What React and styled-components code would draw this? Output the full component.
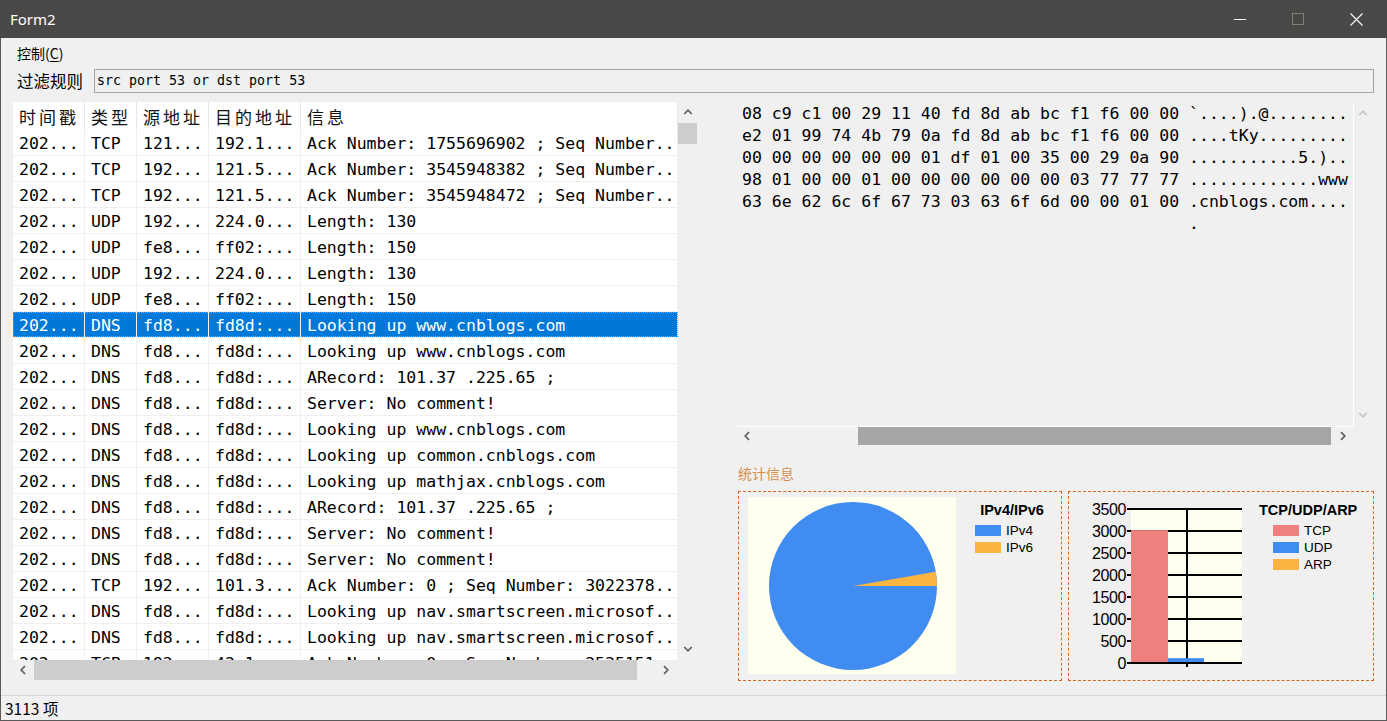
import React from 'react';
import styled, { createGlobalStyle } from 'styled-components';

const MONO = `"DejaVu Sans Mono", "Liberation Mono", monospace`;
const CJK = `"Noto Sans CJK SC", "Noto Sans", sans-serif`;
const ARIAL = `"Liberation Sans", Arial, sans-serif`;

const GlobalStyle = createGlobalStyle`
  html, body {
    margin: 0;
    padding: 0;
    background: #f0f0f0;
    overflow: hidden;
  }
  * {
    box-sizing: border-box;
  }
`;

const Window = styled.div`
  width: 1387px;
  height: 721px;
  display: flex;
  flex-direction: column;
  background: #f0f0f0;
`;

const TitleBar = styled.div`
  height: 38px;
  flex: none;
  display: flex;
  align-items: center;
  padding-left: 10px;
  background: #4a4846;
  color: #fff;
  font-family: "Noto Sans", sans-serif;
  font-size: 15px;
`;

const Caption = styled.div`
  flex: 1;
`;

const Controls = styled.div`
  display: flex;
  height: 100%;
  margin-right: 2px;
`;

const CtrlButton = styled.div`
  width: 58px;
  height: 100%;
  display: flex;
  align-items: center;
  justify-content: center;
`;

const Body = styled.div`
  flex: 1;
  display: flex;
  flex-direction: column;
  border: 1px solid #5b5a58;
  border-top: none;
`;

const MenuBar = styled.div`
  height: 30px;
  display: flex;
  align-items: center;
  padding-left: 16px;
  font-family: ${CJK};
  font-size: 14px;
  color: #000;
`;

const Mnemonic = styled.span`
  text-decoration: underline;
  text-underline-offset: 2px;
`;

const FilterRow = styled.div`
  height: 24px;
  margin-top: 1px;
  display: flex;
  align-items: center;
  padding: 0 12px 0 16px;
`;

const FilterLabel = styled.label`
  width: 77px;
  font-family: ${CJK};
  font-size: 16.5px;
  color: #000;
`;

const FilterInput = styled.input`
  flex: 1;
  height: 24px;
  margin: 0;
  padding: 0 0 1px 2px;
  border: 1px solid #a3a3a3;
  background: #f0f0f0;
  outline: none;
  font-family: ${MONO};
  font-size: 13.3px;
  color: #000;
`;

const Main = styled.div`
  height: 579px;
  margin-top: 9px;
  display: flex;
  padding-left: 12px;
`;

/* ---------- packet list ---------- */

const List = styled.div`
  width: 684px;
  height: 578px;
  display: grid;
  grid-template-columns: 665px 19px;
  grid-template-rows: 558px 20px;
  background: #f0f0f0;
`;

const ListView = styled.div`
  background: #fff;
  overflow: hidden;
`;

const COLS = '72px 52px 72px 92px 1fr';

const HeaderRow = styled.div`
  display: grid;
  grid-template-columns: ${COLS};
  height: 28px;
`;

const HeaderCell = styled.div`
  display: flex;
  align-items: center;
  padding-left: 6px;
  border-right: 1px solid #e5e5e5;
  font-family: ${CJK};
  font-size: 17px;
  letter-spacing: 3px;
  color: #111;
  white-space: nowrap;
  overflow: hidden;
`;

const Row = styled.div`
  position: relative;
  display: grid;
  grid-template-columns: ${COLS};
  height: 26px;
  border-bottom: 1px solid #f0f0f0;
  background: ${p => (p.$selected ? '#0078d7' : '#fff')};
  color: ${p => (p.$selected ? '#fff' : '#000')};

  &::after {
    content: '';
    display: ${p => (p.$selected ? 'block' : 'none')};
    position: absolute;
    inset: 0;
    border: 1px dotted #ff8728;
    pointer-events: none;
  }
`;

const Cell = styled.div`
  display: flex;
  align-items: center;
  padding: 1px 0 0 6px;
  border-right: 1px solid #f0f0f0;
  font-family: ${MONO};
  font-size: 16.5px;
  white-space: pre;
  overflow: hidden;
`;

/* ---------- scrollbars ---------- */

const VScroll = styled.div`
  display: flex;
  flex-direction: column;
  background: #f0f0f0;
`;

const HScroll = styled.div`
  display: flex;
  align-items: center;
  background: #f0f0f0;
`;

const Corner = styled.div`
  background: #f0f0f0;
`;

const ArrowBox = styled.div`
  flex: none;
  width: ${p => p.$w}px;
  height: ${p => p.$h}px;
  display: flex;
  align-items: center;
  justify-content: center;
`;

const Thumb = styled.div`
  flex: none;
  width: ${p => p.$w};
  height: ${p => p.$h};
  margin: ${p => p.$m || '0'};
  background: ${p => p.$color};
`;

const Fill = styled.div`
  flex: 1;
`;

const ChevronSvg = styled.svg`
  transform: rotate(${p => p.$rot}deg);
`;

const ROT = { up: 0, right: 90, down: 180, left: 270 };

const Chevron = ({ dir, color }) => (
  <ChevronSvg $rot={ROT[dir]} width="10" height="10" viewBox="0 0 10 10">
    <path d="M1.2 7 L5 3.2 L8.8 7" fill="none" stroke={color} strokeWidth="1.7" />
  </ChevronSvg>
);

/* ---------- right column ---------- */

const RightCol = styled.div`
  width: 636px;
  margin-left: 41px;
  display: flex;
  flex-direction: column;
`;

const HexBox = styled.div`
  height: 343px;
  flex: none;
  display: grid;
  grid-template-columns: 616px 18px;
  grid-template-rows: 325px 18px;
`;

const HexText = styled.div`
  padding: 1px 0 0 4px;
  border-right: 1px solid #fff;
  border-bottom: 1px solid #fff;
  font-family: ${MONO};
  font-size: 16.5px;
  line-height: 22px;
  white-space: pre;
  overflow: hidden;
  color: #000;
`;

const StatsLabel = styled.div`
  margin-top: 18px;
  height: 20px;
  line-height: 20px;
  font-family: ${CJK};
  font-size: 14px;
  color: #d4904f;
`;

const Panels = styled.div`
  margin-top: 8px;
  height: 190px;
  display: flex;
  gap: 6px;
`;

const Panel = styled.div`
  width: ${p => p.$w}px;
  height: 100%;
  display: flex;
  align-items: flex-start;
  padding: ${p => p.$pad};
  border: 1px dashed #d2691e;
`;

const Legend = styled.div`
  width: ${p => p.$w}px;
  margin-left: ${p => p.$ml}px;
  margin-top: ${p => p.$mt}px;
  font-family: ${ARIAL};
  color: #000;
`;

const LegendTitle = styled.div`
  height: 16px;
  line-height: 16px;
  margin-bottom: 4px;
  text-align: center;
  font-weight: bold;
  font-size: 14.5px;
  white-space: nowrap;
`;

const LegendItem = styled.div`
  height: 17px;
  display: flex;
  align-items: center;
  padding-left: ${p => p.$indent}px;
  font-size: 13.5px;
`;

const Swatch = styled.span`
  width: 26px;
  height: 11px;
  margin-right: 5px;
  background: ${p => p.$color};
`;

const StatusBar = styled.div`
  margin-top: 14px;
  height: 25px;
  display: flex;
  align-items: center;
  padding-left: 4px;
  border-top: 1px solid #d7d7d7;
  font-family: ${CJK};
  font-size: 15.5px;
  color: #000;
`;

/* ---------- data ---------- */

const rows = [
  ['202...', 'TCP', '121...', '192.1...', 'Ack Number: 1755696902 ; Seq Number..'],
  ['202...', 'TCP', '192...', '121.5...', 'Ack Number: 3545948382 ; Seq Number..'],
  ['202...', 'TCP', '192...', '121.5...', 'Ack Number: 3545948472 ; Seq Number..'],
  ['202...', 'UDP', '192...', '224.0...', 'Length: 130'],
  ['202...', 'UDP', 'fe8...', 'ff02:...', 'Length: 150'],
  ['202...', 'UDP', '192...', '224.0...', 'Length: 130'],
  ['202...', 'UDP', 'fe8...', 'ff02:...', 'Length: 150'],
  ['202...', 'DNS', 'fd8...', 'fd8d:...', 'Looking up www.cnblogs.com'],
  ['202...', 'DNS', 'fd8...', 'fd8d:...', 'Looking up www.cnblogs.com'],
  ['202...', 'DNS', 'fd8...', 'fd8d:...', 'ARecord: 101.37 .225.65 ;'],
  ['202...', 'DNS', 'fd8...', 'fd8d:...', 'Server: No comment!'],
  ['202...', 'DNS', 'fd8...', 'fd8d:...', 'Looking up www.cnblogs.com'],
  ['202...', 'DNS', 'fd8...', 'fd8d:...', 'Looking up common.cnblogs.com'],
  ['202...', 'DNS', 'fd8...', 'fd8d:...', 'Looking up mathjax.cnblogs.com'],
  ['202...', 'DNS', 'fd8...', 'fd8d:...', 'ARecord: 101.37 .225.65 ;'],
  ['202...', 'DNS', 'fd8...', 'fd8d:...', 'Server: No comment!'],
  ['202...', 'DNS', 'fd8...', 'fd8d:...', 'Server: No comment!'],
  ['202...', 'TCP', '192...', '101.3...', 'Ack Number: 0 ; Seq Number: 3022378..'],
  ['202...', 'DNS', 'fd8...', 'fd8d:...', 'Looking up nav.smartscreen.microsof..'],
  ['202...', 'DNS', 'fd8...', 'fd8d:...', 'Looking up nav.smartscreen.microsof..'],
  ['202...', 'TCP', '192...', '42.1...', 'Ack Number: 0 ; Seq Number: 2535151..'],
];

const SELECTED = 7;

const headers = ['时间戳', '类型', '源地址', '目的地址', '信息'];

const hexLines = [
  '08 c9 c1 00 29 11 40 fd 8d ab bc f1 f6 00 00 `....).@........',
  'e2 01 99 74 4b 79 0a fd 8d ab bc f1 f6 00 00 ....tKy.........',
  '00 00 00 00 00 00 01 df 01 00 35 00 29 0a 90 ...........5.)..',
  '98 01 00 00 01 00 00 00 00 00 00 03 77 77 77 .............www',
  '63 6e 62 6c 6f 67 73 03 63 6f 6d 00 00 01 00 .cnblogs.com....',
  ' '.repeat(45) + '.',
];

const COLORS = { blue: '#418cf0', orange: '#fcb441', coral: '#f08080' };

const yTicks = [3500, 3000, 2500, 2000, 1500, 1000, 500, 0];

const PieChart = () => (
  <svg width="208" height="177" viewBox="0 0 208 177">
    <rect x="0" y="0" width="208" height="177" fill="#fffff0" />
    <circle cx="105" cy="89" r="84" fill={COLORS.blue} />
    <path d="M105 89 L189 89 A84 84 0 0 0 187.8 74.85 Z" fill={COLORS.orange} />
  </svg>
);

const BarChart = () => {
  const top = 11;
  const bottom = 165;
  const scale = (bottom - top) / 3500;
  const bars = [
    { x: 51, w: 37, v: 3020, c: COLORS.coral },
    { x: 88, w: 36, v: 110, c: COLORS.blue },
    { x: 124, w: 38, v: 22, c: COLORS.orange },
  ];
  return (
    <svg width="170" height="175" viewBox="0 0 170 175">
      <rect x="51" y={top} width="111" height={bottom - top} fill="#fffff0" />
      {yTicks.map((t, i) => (
        <line key={t} x1="47" x2="162" y1={top + i * 22} y2={top + i * 22} stroke="#000" strokeWidth="2" />
      ))}
      <line x1="107" x2="107" y1={top} y2={bottom + 4} stroke="#000" strokeWidth="2" />
      {bars.map(b => (
        <rect key={b.x} x={b.x} y={bottom - b.v * scale} width={b.w} height={b.v * scale} fill={b.c} />
      ))}
      <line x1="47" x2="162" y1={bottom} y2={bottom} stroke="#000" strokeWidth="2" />
      {yTicks.map((t, i) => (
        <text
          key={t}
          x="46"
          y={top + i * 22 + 6}
          textAnchor="end"
          fontFamily={ARIAL}
          fontSize="16"
          letterSpacing="-0.4"
          fill="#000"
        >
          {t}
        </text>
      ))}
    </svg>
  );
};

const App = () => {
  return (
    <Window>
      <GlobalStyle />
      <TitleBar>
        <Caption>Form2</Caption>
        <Controls>
          <CtrlButton>
            <svg width="12" height="12" viewBox="0 0 12 12">
              <line x1="0" x2="12" y1="6.5" y2="6.5" stroke="#fff" strokeWidth="1" />
            </svg>
          </CtrlButton>
          <CtrlButton>
            <svg width="12" height="12" viewBox="0 0 12 12">
              <rect x="0.5" y="0.5" width="11" height="11" fill="none" stroke="#807e7b" strokeWidth="1" />
            </svg>
          </CtrlButton>
          <CtrlButton>
            <svg width="13" height="13" viewBox="0 0 13 13">
              <path d="M0.5 0.5 L12.5 12.5 M12.5 0.5 L0.5 12.5" stroke="#fff" strokeWidth="1.1" />
            </svg>
          </CtrlButton>
        </Controls>
      </TitleBar>

      <Body>
        <MenuBar>
          控制(<Mnemonic>C</Mnemonic>)
        </MenuBar>

        <FilterRow>
          <FilterLabel>过滤规则</FilterLabel>
          <FilterInput readOnly value="src port 53 or dst port 53" />
        </FilterRow>

        <Main>
          <List>
            <ListView>
              <HeaderRow>
                {headers.map(h => (
                  <HeaderCell key={h}>{h}</HeaderCell>
                ))}
              </HeaderRow>
              {rows.map((r, i) => (
                <Row key={i} $selected={i === SELECTED}>
                  {r.map((c, j) => (
                    <Cell key={j}>{c}</Cell>
                  ))}
                </Row>
              ))}
            </ListView>
            <VScroll>
              <ArrowBox $w={19} $h={20}>
                <Chevron dir="up" color="#606060" />
              </ArrowBox>
              <Thumb $w="19px" $h="21px" $m="1px 0 0 0" $color="#cdcdcd" />
              <Fill />
              <ArrowBox $w={19} $h={22}>
                <Chevron dir="down" color="#606060" />
              </ArrowBox>
            </VScroll>
            <HScroll>
              <ArrowBox $w={20} $h={20}>
                <Chevron dir="left" color="#606060" />
              </ArrowBox>
              <Thumb $w="603px" $h="20px" $m="0 0 0 1px" $color="#cdcdcd" />
              <Fill />
              <ArrowBox $w={25} $h={20}>
                <Chevron dir="right" color="#606060" />
              </ArrowBox>
            </HScroll>
            <Corner />
          </List>

          <RightCol>
            <HexBox>
              <HexText>{hexLines.join('\n')}</HexText>
              <VScroll>
                <ArrowBox $w={18} $h={22}>
                  <Chevron dir="up" color="#c3c3c3" />
                </ArrowBox>
                <Fill />
                <ArrowBox $w={18} $h={24}>
                  <Chevron dir="down" color="#c3c3c3" />
                </ArrowBox>
              </VScroll>
              <HScroll>
                <ArrowBox $w={18} $h={18}>
                  <Chevron dir="left" color="#606060" />
                </ArrowBox>
                <Thumb $w="473px" $h="18px" $m="0 0 0 102px" $color="#a6a6a6" />
                <Fill />
                <ArrowBox $w={22} $h={18}>
                  <Chevron dir="right" color="#606060" />
                </ArrowBox>
              </HScroll>
              <Corner />
            </HexBox>

            <StatsLabel>统计信息</StatsLabel>

            <Panels>
              <Panel $w={324} $pad="5px 0 0 9px">
                <PieChart />
                <Legend $w={74} $ml={19} $mt={5}>
                  <LegendTitle>IPv4/IPv6</LegendTitle>
                  <LegendItem $indent={0}>
                    <Swatch $color={COLORS.blue} />
                    IPv4
                  </LegendItem>
                  <LegendItem $indent={0}>
                    <Swatch $color={COLORS.orange} />
                    IPv6
                  </LegendItem>
                </Legend>
              </Panel>
              <Panel $w={306} $pad="6px 0 0 11px">
                <BarChart />
                <Legend $w={98} $ml={9} $mt={4}>
                  <LegendTitle>TCP/UDP/ARP</LegendTitle>
                  <LegendItem $indent={14}>
                    <Swatch $color={COLORS.coral} />
                    TCP
                  </LegendItem>
                  <LegendItem $indent={14}>
                    <Swatch $color={COLORS.blue} />
                    UDP
                  </LegendItem>
                  <LegendItem $indent={14}>
                    <Swatch $color={COLORS.orange} />
                    ARP
                  </LegendItem>
                </Legend>
              </Panel>
            </Panels>
          </RightCol>
        </Main>

        <StatusBar>3113 项</StatusBar>
      </Body>
    </Window>
  );
};

export default App;
